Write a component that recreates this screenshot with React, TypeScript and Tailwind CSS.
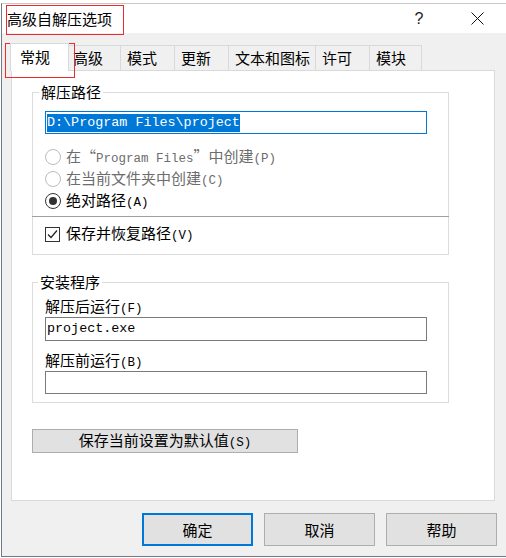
import React from "react";

const CJK = "font-['Noto_Sans_CJK_SC',sans-serif]";

function Sim({ text }: { text: string }) {
  const parts = text.split(/([\x20-\x7e]+)/);
  return (
    <>
      {parts.map((p, i) =>
        i % 2 === 1 ? (
          <span key={i} className="font-['Liberation_Mono',monospace] text-[12.5px] whitespace-pre">
            {p}
          </span>
        ) : (
          <span key={i}>{p}</span>
        )
      )}
    </>
  );
}

function Radio({ checked, disabled, label }: { checked?: boolean; disabled?: boolean; label: string }) {
  return (
    <div className="flex items-center h-[22px] ml-[12px]">
      <div
        className={`w-[16px] h-[16px] rounded-full border bg-white flex items-center justify-center ${
          disabled ? "border-[#bcbcbc]" : "border-[#333333]"
        }`}
      >
        {checked && <div className="w-[8px] h-[8px] rounded-full bg-[#333333]" />}
      </div>
      <span className={`ml-[5px] text-[15px] leading-[16px] ${disabled ? "text-[#6d6d6d]" : "text-black"}`}>
        <Sim text={label} />
      </span>
    </div>
  );
}

const tabs = [
  { label: "高级", w: "w-[52px]", pl: "pl-[4px]" },
  { label: "模式", w: "w-[54px]", pl: "pl-[6px]" },
  { label: "更新", w: "w-[54px]", pl: "pl-[6px]" },
  { label: "文本和图标", w: "w-[87px]", pl: "pl-[6px]" },
  { label: "许可", w: "w-[54px]", pl: "pl-[6px]" },
  { label: "模块", w: "w-[52px]", pl: "pl-[6px]" },
];

export default function App() {
  return (
    <div className={`relative w-[506px] h-[558px] bg-white overflow-hidden pt-[3px] pl-[1px] ${CJK}`}>
      <div className="w-[505px] h-[554px] border-l border-b border-t border-l-[#6f7a86] border-b-[#6f7a86] border-t-[#c8c8c8] flex flex-col">
        {/* title bar */}
        <div className="h-[29px] bg-white flex items-center shrink-0">
          <span className="pl-[5px] text-[15px] leading-[20px] text-black">高级自解压选项</span>
          <span className="ml-auto w-[24px] text-center font-['Liberation_Sans',sans-serif] text-[16px] leading-[20px] text-[#222]">
            ?
          </span>
          <div className="ml-[23px] w-[46px] flex items-center justify-center">
            <svg width="13" height="13" viewBox="0 0 13 13">
              <path d="M0.5 0.5 L12.5 12.5 M12.5 0.5 L0.5 12.5" stroke="#111" strokeWidth="1" fill="none" />
            </svg>
          </div>
          <div className="w-[6px]" />
        </div>

        {/* body */}
        <div className="flex-1 bg-[#f0f0f0] flex flex-col">
          {/* tabs */}
          <div className="mt-[10px] ml-[8px] h-[27px] flex items-end">
            <div className="relative z-10 self-start h-[28px] w-[59px] bg-white border-l border-t border-r border-[#d9d9d9] pl-[9px] flex items-center">
              <span className="text-[15px] leading-[20px] text-black -mt-[1px]">常规</span>
            </div>
            {tabs.map((t) => (
              <div
                key={t.label}
                className={`${t.w} ${t.pl} h-[25px] border-t border-r border-[#d9d9d9] bg-[#f0f0f0] flex items-center`}
              >
                <span className="text-[15px] leading-[20px] text-black">{t.label}</span>
              </div>
            ))}
          </div>

          {/* panel */}
          <div className="ml-[9px] w-[484px] h-[431px] bg-white border border-[#d9d9d9] flex flex-col">
            {/* group 1 */}
            <div className="relative ml-[20px] mt-[21px] w-[417px] h-[163px] border border-[#dcdcdc] flex flex-col">
              <span className="absolute -top-[11px] left-[6px] bg-white px-[2px] text-[15px] leading-[20px] text-black">
                解压路径
              </span>
              <div className="ml-[12px] mt-[18px] w-[382px] h-[23px] border border-[#0078d7] flex items-center pl-[1px]">
                <span className="bg-[#0078d7] text-white h-[18px] leading-[18px] font-['Liberation_Mono',monospace] text-[13.4px] whitespace-pre">
                  D:\Program Files\project
                </span>
              </div>
              <div className="mt-[12px]">
                <Radio disabled label="在“Program Files”中创建(P)" />
                <Radio disabled label="在当前文件夹中创建(C)" />
                <Radio checked label="绝对路径(A)" />
              </div>
              <div className="mt-[4px] -mx-[1px] h-px bg-[#a0a0a0]" />
              <div className="mt-[6px] ml-[12px] h-[22px] flex items-center">
                <div className="w-[15px] h-[15px] border border-[#333333] bg-white flex items-center justify-center">
                  <svg width="11" height="11" viewBox="0 0 11 11">
                    <path d="M1 5.5 L4 8.5 L10 1.5" stroke="#222" strokeWidth="1.2" fill="none" />
                  </svg>
                </div>
                <span className="ml-[6px] text-[15px] leading-[16px] text-black">
                  <Sim text="保存并恢复路径(V)" />
                </span>
              </div>
            </div>

            {/* group 2 */}
            <div className="relative ml-[20px] mt-[27px] w-[417px] h-[121px] border border-[#dcdcdc] flex flex-col">
              <span className="absolute -top-[11px] left-[5px] bg-white px-[2px] text-[15px] leading-[20px] text-black">
                安装程序
              </span>
              <div className="ml-[12px] mt-[15px] text-[15px] leading-[16px] text-black">
                <Sim text="解压后运行(F)" />
              </div>
              <div className="ml-[12px] w-[382px] h-[24px] border border-[#7a7a7a] flex items-center pl-[1px]">
                <span className="font-['Liberation_Mono',monospace] text-[13.4px] leading-[18px] text-black">
                  project.exe
                </span>
              </div>
              <div className="ml-[12px] mt-[11px] text-[15px] leading-[16px] text-black">
                <Sim text="解压前运行(B)" />
              </div>
              <div className="ml-[12px] w-[382px] h-[23px] border border-[#7a7a7a]" />
            </div>

            <div className="ml-[20px] mt-[26px] w-[266px] h-[24px] bg-[#e1e1e1] border border-[#adadad] flex items-center justify-center">
              <span className="text-[15px] leading-[16px] text-black">
                <Sim text="保存当前设置为默认值(S)" />
              </span>
            </div>
          </div>

          {/* buttons */}
          <div className="mt-[12px] ml-[140px] flex gap-[11px]">
            <div className="w-[111px] h-[33px] bg-[#e1e1e1] border-2 border-[#0078d7] flex items-center justify-center">
              <span className="text-[15px] leading-[20px] text-black">确定</span>
            </div>
            <div className="w-[111px] h-[33px] bg-[#e1e1e1] border border-[#adadad] flex items-center justify-center">
              <span className="text-[15px] leading-[20px] text-black">取消</span>
            </div>
            <div className="w-[111px] h-[33px] bg-[#e1e1e1] border border-[#adadad] flex items-center justify-center">
              <span className="text-[15px] leading-[20px] text-black">帮助</span>
            </div>
          </div>
        </div>
      </div>

      {/* annotation rectangles */}
      <div className="absolute left-[6px] top-[5px] w-[118px] h-[30px] border border-[#ee2a2a] pointer-events-none" />
      <div className="absolute left-[5px] top-[43px] w-[70px] h-[35px] border border-[#ee2a2a] pointer-events-none" />
    </div>
  );
}
